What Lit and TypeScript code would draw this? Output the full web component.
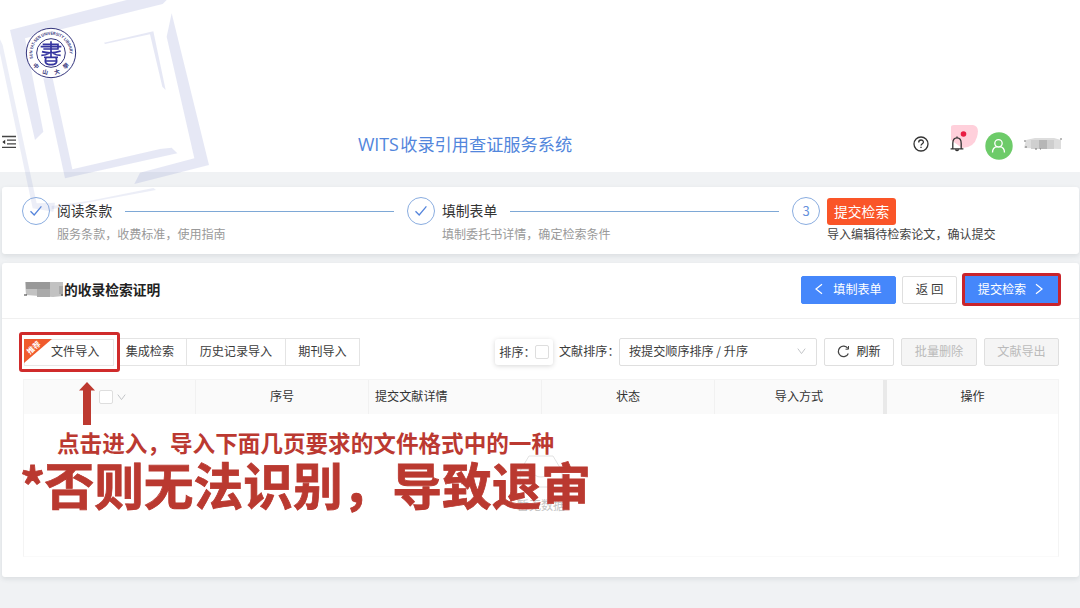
import { LitElement, html, css, svg } from "lit";
import { customElement } from "lit/decorators.js";

const check = svg`<svg width="14" height="14" viewBox="0 0 14 14" fill="none" stroke="#5585dc" stroke-width="1.3"><path d="M1.5 7.2 5.2 11 12.4 2.4"/></svg>`;
const down = html`<svg class="down" width="9" height="9" viewBox="0 0 9 9" fill="none" stroke="#c3c5c8" stroke-width="1"><path d="M.8 1.6 4.5 6.6 8.2 1.6"/></svg>`;

@customElement("app-root")
export class AppRoot extends LitElement {
  static styles = css`
    :host {
      display: flex; flex-direction: column; position: relative;
      width: 1080px; height: 608px; overflow: hidden; box-sizing: border-box;
      background: #f0f2f4; color: #3c3c3c;
      font: 12.1px/18px "Noto Sans CJK SC", sans-serif;
    }
    * { box-sizing: border-box; }
    svg { display: block; flex: none; }
    .top { height: 172px; flex: none; background: #fff; display: flex; align-items: flex-start; padding-top: 125px; }
    .fold { margin: 10px 0 0 2px; }
    .name { margin: 5px 0 0 341px; width: 216px; font: 17.2px/28px "Open Sans", "Noto Sans CJK SC", sans-serif; color: #5286dc; white-space: nowrap; }
    .name b { display: inline-block; width: 42.2px; font-weight: 400; font-size: 17.8px; letter-spacing: -.1px; }
    .help { margin: 11px 0 0 339px; }
    .bell { margin-left: 17px; }
    .avatar { margin: 7px 0 0 7px; }
    .blur { margin: 11px 0 0 10px; }
    .card { background: #fff; margin: 0 1px 0 2px; border-radius: 3px; box-shadow: 0 2px 5px rgba(60, 70, 80, .12); flex: none; }
    .steps { margin-top: 15px; height: 67px; display: flex; padding: 10px 0 0 20px; }
    .step { width: 385px; flex: none; display: flex; gap: 7px; }
    .step.last { width: 230px; }
    .dot { width: 28px; height: 28px; border: 1px solid #8aade0; border-radius: 50%; display: grid; place-items: center; color: #6690dc; font-size: 13px; flex: none; }
    .body { flex: 1; white-space: nowrap; }
    .line { display: flex; align-items: center; height: 28px; line-height: 26px; padding-bottom: 2px; font-size: 13.8px; color: #333; }
    .line::after { content: ""; flex: 1; height: 1px; background: #7ea8d6; margin: 3px 13px 0 13px; }
    .last .line { padding-bottom: 0; }
    .last .line::after { display: none; }
    .desc { color: #999; line-height: 18px; font-size: 12.05px; }
    .last .desc { color: #444; }
    .tag { background: #fa5528; color: #fff; border-radius: 3px; height: 27px; line-height: 26px; padding: 0 7px; }
    .main { margin-top: 9px; height: 314px; }
    .head { height: 56px; border-bottom: 1px solid #f0f0f0; display: flex; align-items: center; padding: 0 18px 2px 21px; }
    .head h1 { font-size: 13.75px; line-height: 20px; margin: 0; padding-bottom: 2px; color: #222; font-weight: 700; }
    .grow { flex: 1; }
    .btn { height: 28px; border: 1px solid #dfdfdf; border-radius: 2px; background: #fff; display: flex; align-items: center; justify-content: center; white-space: nowrap; flex: none; padding-bottom: 1px; }
    .blue { background: #4587fb; border-color: #4587fb; color: #fff; }
    .prev { width: 95px; gap: 10px; }
    .back { width: 55px; margin: 0 5px 0 6px; font-size: 12.4px; }
    .send { width: 99px; height: 33px; border: 3px solid #c9242c; border-radius: 3px; gap: 9px; padding-right: 2px; }
    .tools { height: 60px; display: flex; align-items: center; padding: 5px 20px 0 17px; }
    .import { width: 101px; height: 40px; border: 3px solid #d02b2b; border-radius: 3px; padding: 4px 3px 4px 2px; }
    .import div { height: 27px; border: 1px solid #e8e8e8; position: relative; padding-left: 26px; line-height: 22px; }
    .ribbon { position: absolute; left: -1px; top: -1px; }
    .tab { height: 28px; border: 1px solid #e4e4e4; border-left: 0; line-height: 24px; text-align: center; }
    .sort { margin-left: 135px; width: 58px; height: 26px; box-shadow: 0 1px 5px rgba(0,0,0,.16); border-radius: 3px; display: flex; align-items: center; padding-left: 4px; white-space: nowrap; }
    .box { width: 14px; height: 14px; border: 1px solid #dedede; border-radius: 2px; background: #fff; flex: none; }
    .lab { width: 36px; flex: none; }
    .doc { width: 60px; margin-left: 6px; padding-bottom: 1px; white-space: nowrap; }
    .select { width: 198px; justify-content: space-between; padding: 0 10px 1px 9px; }
    .fresh { width: 70px; margin: 0 7px; gap: 6px; color: #333; }
    .off { background: #f5f5f5; color: #bbb; }
    .table { margin: 0 20px 0 21px; height: 178px; border: 1px solid #f4f4f4; border-bottom-color: #fafafa; }
    .row { display: grid; grid-template-columns: 172px 173px 173px 173px 172px 1fr; height: 34px; background: #fafafa; line-height: 31px; text-align: center; color: #333; }
    .row > div { border-right: 1px solid #f1f1f1; }
    .row > div:last-child { border: 0; }
    .row .detail { text-align: left; padding-left: 6px; }
    .row .mode { border-right: 4px solid #e9e9e9; }
    .row .pick { display: flex; align-items: center; padding-left: 75px; gap: 4px; }
    .none { display: flex; flex-direction: column; align-items: center; padding-top: 40px; color: #c4c4c4; line-height: 17px; }
    .none svg { margin-bottom: 7px; }
    .layer { position: absolute; left: 0; top: 0; }
    .note { position: absolute; left: 57px; top: 426px; font-size: 22.6px; line-height: 34px; font-weight: 700; color: #bb3931; white-space: nowrap; }
    .warn { position: absolute; left: 20px; top: 446px; font-size: 49.7px; line-height: 74px; font-weight: 700; color: #ba3930; white-space: nowrap; -webkit-text-stroke: .8px #ba3930; }
    .warn span { display: inline-block; width: 24.5px; }
  `;

  render() {
    return html`
      <header class="top">
        <svg class="fold" width="15" height="14" viewBox="0 0 15 14" stroke="#444" stroke-width="1.3"><path d="M0 1.5H14M5 5.2H14M5 8.8H14M0 12.4H14"/><path d="M.3 7 3.2 4.7V9.3Z" fill="#333" stroke="none"/></svg>
        <div class="name"><b>WITS</b>收录引用查证服务系统</div>
        <svg class="help" width="16" height="16" viewBox="0 0 16 16" fill="none" stroke="#333" stroke-width="1.3"><circle cx="8" cy="8" r="7"/><path d="M5.7 6.4C5.7 3.2 10.4 3.3 10.4 6.2 10.4 7.8 8 7.8 8 9.6M8 10.8V12.1"/></svg>
        <svg class="bell" width="32" height="30" viewBox="0 0 32 30"><path d="M5 2Q5 0 8 0H27Q34 1 31 12 28 23 16 23L5 15Z" fill="#ffd0db"/><path d="M6.8 23.4V18.5C6.8 11 15.2 11 15.2 18.5V23.4M4.6 23.8H17.4M11 11.5V13M9.5 24.6Q11 26.8 12.6 24.6" fill="none" stroke="#333" stroke-width="1.3"/><circle cx="17.5" cy="9" r="2.8" fill="#e91d43"/></svg>
        <svg class="avatar" width="28" height="28" viewBox="0 0 28 28"><circle cx="14" cy="14" r="13.7" fill="#6dcb69"/><g fill="none" stroke="#fff" stroke-width="1.3"><circle cx="13.5" cy="11.3" r="3.7"/><path d="M7.5 20.5C7.5 17 9.8 15 12 14.6M19.5 20.5C19.5 17 17.2 15 15 14.6"/></g></svg>
        <svg class="blur" width="40" height="18" viewBox="0 0 40 18"><path d="M3 4 12 2H31L38 4V13L1 12Z" fill="#ddd"/><path d="M8 4H16V13H8Z" fill="#cfcfcf"/><path d="M16 4H24V13H16Z" fill="#b6b6b6"/><path d="M24 4H31V13H24Z" fill="#cecece"/><path d="M1 5H3M37 3H39M2 11H4M12 13H14M17 13H18" stroke="#777"/></svg>
      </header>

      <section class="card steps">
        <div class="step"><div class="dot">${check}</div><div class="body"><div class="line">阅读条款</div><div class="desc">服务条款，收费标准，使用指南</div></div></div>
        <div class="step"><div class="dot">${check}</div><div class="body"><div class="line">填制表单</div><div class="desc">填制委托书详情，确定检索条件</div></div></div>
        <div class="step last"><div class="dot">3</div><div class="body"><div class="line"><span class="tag">提交检索</span></div><div class="desc">导入编辑待检索论文，确认提交</div></div></div>
      </section>

      <section class="card main">
        <div class="head">
          <svg width="41" height="18" viewBox="0 0 41 18"><path d="M2 1H40V15L30 16 3 14Z" fill="#c2c2c2"/><path d="M3 1H27V8H3Z" fill="#999"/><path d="M14 8H27V16H14Z" fill="#aaa"/><path d="M36 5H40V13H36Z" fill="#aaa"/><path d="M1 14H4M38 14H40" stroke="#333"/></svg>
          <h1>的收录检索证明</h1><span class="grow"></span>
          <div class="btn blue prev"><svg width="8" height="12" viewBox="0 0 8 12" fill="none" stroke="#fff" stroke-width="1.2"><path d="M7 1.3 1 6 7 10.7"/></svg>填制表单</div>
          <div class="btn back">返 回</div>
          <div class="btn blue send">提交检索<svg width="8" height="12" viewBox="0 0 8 12" fill="none" stroke="#fff" stroke-width="1.2"><path d="M1 1.3 7 6 1 10.7"/></svg></div>
        </div>
        <div class="tools">
          <div class="import"><div>
            <svg class="ribbon" width="28" height="24" viewBox="0 0 28 24"><path d="M0 0H28L0 24Z" fill="#f05a2d"/><text x="9.5" y="11.5" transform="rotate(-41 9.5 8.5)" text-anchor="middle" font-size="7.5" font-weight="700" fill="#fff">推荐</text></svg>
            文件导入</div></div>
          <div class="tab" style="width:68px;padding-right:6px">集成检索</div>
          <div class="tab" style="width:99px">历史记录导入</div>
          <div class="tab" style="width:75px">期刊导入</div>
          <div class="sort"><span class="lab">排序：</span><span class="box"></span></div>
          <div class="doc">文献排序：</div>
          <div class="btn select"><span>按提交顺序排序 / 升序</span>${down}</div>
          <div class="btn fresh"><svg width="13" height="13" viewBox="0 0 13 13" fill="none" stroke="#444" stroke-width="1.3"><path d="M11.3 8.4A5.2 5.2 0 1 1 10.8 3.4"/><path d="M11.5 1V4.2H8.5" stroke-width="1"/></svg>刷新</div>
          <div class="btn off" style="width:76px;margin-right:7px">批量删除</div>
          <div class="btn off" style="width:75px">文献导出</div>
        </div>
        <div class="table">
          <div class="row"><div class="pick"><span class="box"></span>${down}</div><div>序号</div><div class="detail">提交文献详情</div><div>状态</div><div class="mode">导入方式</div><div>操作</div></div>
          <div class="none">
            <svg width="44" height="35" viewBox="0 0 44 35" fill="none" stroke="#e2e2e2"><path d="M1 17 10 2H34L43 17V33H1ZM1 17H14Q15 23 22 23T30 17H43"/></svg>
            暂无数据
          </div>
        </div>
      </section>

      <svg class="layer" width="220" height="220" viewBox="0 0 660 660">
        <g fill="#8c98d0" fill-opacity=".22">
          <path d="M30 90 380 0H500L488 12 75 115 130 395 105 420Z"/>
          <path d="M130 235H158L217 508 480 447 515 443 532 460 195 535Z"/>
          <path d="M515 40 500 110 583 475 420 518 403 552 627 495Z"/>
          <path d="M312 128 460 94 497 270 487 260 450 103 315 132Z"/>
          <path d="M0 118 8 135 110 610 165 608 160 635 98 625 0 160Z" fill-opacity=".17"/>
          <path d="M155 628 468 570 460 564 270 602 155 618Z" fill-opacity=".17"/>
        </g>
        <circle cx="153" cy="159" r="74" fill="#fff" stroke="#34357d" stroke-width="3"/>
        <circle cx="153" cy="159" r="43" fill="none" stroke="#34357d" stroke-width="3"/>
        <defs><path id="ring" d="M99 175A56 56 0 1 1 207 175"/></defs>
        <text font-family="Liberation Sans" font-size="13" font-weight="700" fill="#34357d"><textPath href="#ring" textLength="192" lengthAdjust="spacingAndGlyphs">SUN YAT-SEN UNIVERSITY LIBRARY</textPath></text>
        <g fill="none" stroke="#3535a0" stroke-width="5">
          <path d="M153 124V172M128 133H174V146M122 140H184M130 147H176M126 155Q153 163 182 153M124 166Q138 166 146 160M182 166Q168 166 160 160M132 172H174"/>
          <path d="M138 174Q130 194 153 194T168 174M138 183H168"/>
        </g>
        <g fill="#34357d" font-weight="700" text-anchor="middle" font-size="17">
          <text x="108" y="204" transform="rotate(40 108 198)">中</text>
          <text x="136" y="222" transform="rotate(14 136 216)">山</text>
          <text x="171" y="222" transform="rotate(-14 171 216)">大</text>
          <text x="198" y="204" transform="rotate(-40 198 198)">學</text>
        </g>
      </svg>
      <svg class="layer" width="110" height="430" viewBox="0 0 110 430"><path d="M87 382 95 390.5H91V425H83V390.5H79Z" fill="#bd3930"/></svg>
      <div class="note">点击进入，导入下面几页要求的文件格式中的一种</div>
      <div class="warn"><span>*</span>否则无法识别，导致退审</div>
    `;
  }
}
